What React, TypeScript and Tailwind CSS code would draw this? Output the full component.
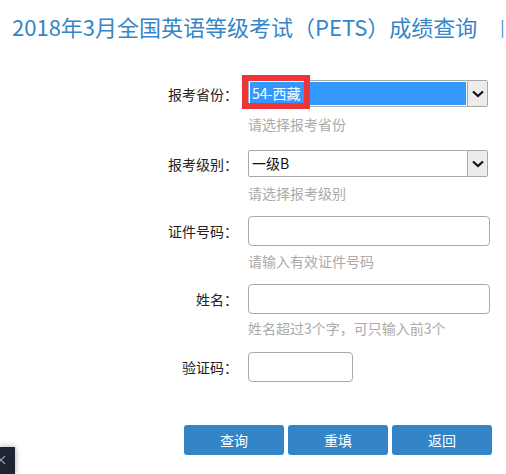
import React from "react";

const font = { fontFamily: '"Noto Sans CJK SC", "Noto Sans", sans-serif' };

function Chevron() {
  return (
    <svg width="12" height="8" viewBox="0 0 12 8">
      <path d="M1 1.5 L6 6 L11 1.5" fill="none" stroke="#111" strokeWidth="2.2" />
    </svg>
  );
}

function Label({ children }: { children: React.ReactNode }) {
  return <div className="w-[238px] shrink-0 text-right text-[14px] text-[#222] leading-none">{children}</div>;
}

function Hint({ children, mt }: { children: React.ReactNode; mt: string }) {
  return (
    <div className={`flex ${mt}`}>
      <div className="w-[248px] shrink-0" />
      <div className="h-[20px] text-[14px] leading-[20px] text-[#aaaaaa]">{children}</div>
    </div>
  );
}

export default function App() {
  return (
    <div className="relative w-[506px] h-[474px] bg-white overflow-hidden" style={font}>
      <div className="h-[52px] flex items-center pl-[12px] text-[22px] text-[#3486c9] whitespace-nowrap">
        <span>2018年3月全国英语等级考试（PETS）成绩查询</span>
        <span className="ml-[23px] text-[16px] text-[#3486c9]">|</span>
      </div>

      {/* Row 1 */}
      <div className="flex items-center mt-[28px]">
        <Label>报考省份：</Label>
        <div className="relative ml-[10px] w-[240px] h-[27px] border border-[#a9a9a9] rounded-[2px] flex bg-white">
          <div className="flex-1 m-[1px] bg-[#3399ff] text-white text-[14px] leading-[23px] pl-[2px]">54-西藏</div>
          <div className="w-[20px] border-l border-[#a9a9a9] bg-[#ececec] flex items-center justify-center">
            <Chevron />
          </div>
          <div className="absolute left-[-7px] top-[-6px] w-[68px] h-[34px] border-[6px] border-[#ef3438]" />
        </div>
      </div>
      <Hint mt="mt-[7px]">请选择报考省份</Hint>

      {/* Row 2 */}
      <div className="flex items-center mt-[16px]">
        <Label>报考级别：</Label>
        <div className="ml-[10px] w-[240px] h-[27px] border border-[#a9a9a9] rounded-[2px] flex bg-white">
          <div className="flex-1 text-[#111] text-[14px] leading-[25px] pl-[3px]">一级B</div>
          <div className="w-[20px] border-l border-[#a9a9a9] bg-[#ececec] flex items-center justify-center">
            <Chevron />
          </div>
        </div>
      </div>
      <Hint mt="mt-[6px]">请选择报考级别</Hint>

      {/* Row 3 */}
      <div className="flex items-center mt-[13px]">
        <Label>证件号码：</Label>
        <div className="ml-[10px] w-[242px] h-[30px] border border-[#a9a9a9] rounded-[4px] bg-white" />
      </div>
      <Hint mt="mt-[5px]">请输入有效证件号码</Hint>

      {/* Row 4 */}
      <div className="flex items-center mt-[13px]">
        <Label>姓名：</Label>
        <div className="ml-[10px] w-[242px] h-[30px] border border-[#a9a9a9] rounded-[4px] bg-white" />
      </div>
      <Hint mt="mt-[4px]">姓名超过3个字，可只输入前3个</Hint>

      {/* Row 5 */}
      <div className="flex items-center mt-[14px]">
        <Label>验证码：</Label>
        <div className="ml-[10px] w-[105px] h-[30px] border border-[#a9a9a9] rounded-[4px] bg-white" />
      </div>

      {/* Buttons */}
      <div className="flex gap-[4px] mt-[43px] pl-[184px]">
        {["查询", "重填", "返回"].map((t) => (
          <div
            key={t}
            className="w-[100px] h-[30px] rounded-[3px] bg-[#3385c8] text-white text-[14px] flex items-center justify-center"
          >
            {t}
          </div>
        ))}
      </div>

      {/* bottom-left widget */}
      <div className="absolute left-0 bottom-0 w-[15px] h-[27px] bg-[#1e2431] shadow-[0_0_6px_rgba(0,0,0,0.35)] overflow-hidden">
        <svg className="absolute left-[-4px] top-[8px]" width="10" height="10" viewBox="0 0 10 10">
          <path d="M1 1 L9 9 M9 1 L1 9" stroke="#9aa0aa" strokeWidth="1.2" />
        </svg>
      </div>
    </div>
  );
}
